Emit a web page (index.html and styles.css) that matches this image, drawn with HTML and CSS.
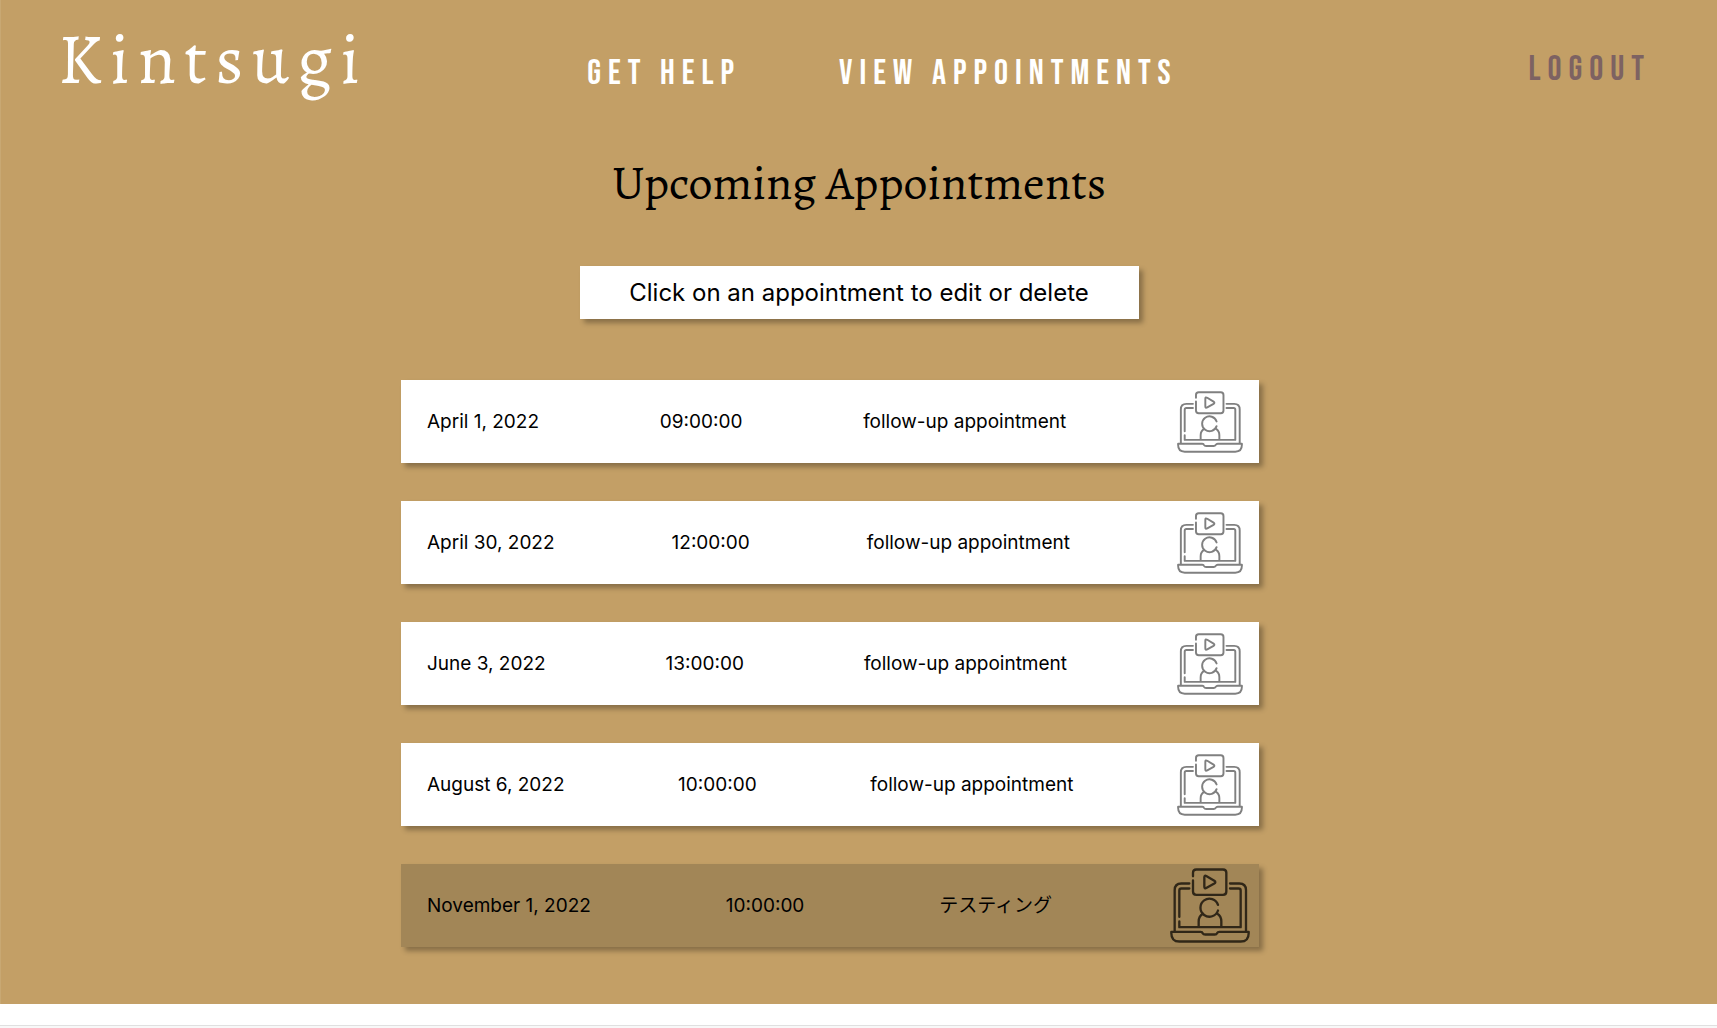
FILE: index.html
```html
<!DOCTYPE html>
<html lang="en">
<head>
<meta charset="utf-8">
<title>Kintsugi</title>
<link rel="stylesheet" href="styles.css">
</head>
<body>
<svg class="sprite" aria-hidden="true">
  <symbol id="video-call" viewBox="0 0 240 224">
    <g fill="none" stroke="currentColor" stroke-width="7" stroke-linecap="round" stroke-linejoin="round">
      <path d="M69 24V14Q69 4 79 4H159Q169 4 169 14V70Q169 80 159 80H79Q69 80 69 70V37"/>
      <path d="M103 27V55Q103 63 110 59L133 46Q139 42 133 38L110 24Q103 20 103 27Z"/>
      <path d="M58 46H34Q14 46 14 66V188M180 46H208Q228 46 228 66V188"/>
      <path d="M58 61H34Q28 61 28 67V146M28 160V177H212V67Q212 61 206 61H180"/>
      <path d="M144 110A27 27 0 1 0 144 127"/>
      <path d="M86 174V160Q86 144 99 137M142 137Q154 144 154 160V174"/>
      <path d="M4 191H92Q97 191 98 195Q100 199 106 199H134Q140 199 141 195Q143 191 148 191H236V195Q236 220 212 220H28Q4 220 4 195Z"/>
    </g>
  </symbol>
</svg>

<div class="page">
  <header class="header">
    <a class="logo" href="#">Kintsugi</a>
    <nav class="nav">
      <a href="#">GET HELP</a>
      <a href="#">VIEW APPOINTMENTS</a>
    </nav>
    <button class="logout" type="button">LOGOUT</button>
  </header>
  <main class="main">
    <h1 class="title">Upcoming Appointments</h1>
    <p class="hint">Click on an appointment to edit or delete</p>
    <ul class="list">
      <li><a class="row" href="#"><span>April 1, 2022</span><span>09:00:00</span><span>follow-up appointment</span><svg class="icon"><use href="#video-call"/></svg></a></li>
      <li><a class="row" href="#"><span>April 30, 2022</span><span>12:00:00</span><span>follow-up appointment</span><svg class="icon"><use href="#video-call"/></svg></a></li>
      <li><a class="row" href="#"><span>June 3, 2022</span><span>13:00:00</span><span>follow-up appointment</span><svg class="icon"><use href="#video-call"/></svg></a></li>
      <li><a class="row" href="#"><span>August 6, 2022</span><span>10:00:00</span><span>follow-up appointment</span><svg class="icon"><use href="#video-call"/></svg></a></li>
      <li><a class="row row-active" href="#"><span>November 1, 2022</span><span>10:00:00</span><span lang="ja">テスティング</span><svg class="icon"><use href="#video-call"/></svg></a></li>
    </ul>
  </main>
</div>
<footer class="footer"></footer>
</body>
</html>
```
FILE: styles.css
```css
* {
  box-sizing: border-box;
}

body {
  margin: 0;
  background: #f8f8f8;
  color: #000;
  font-family: Inter, "Noto Sans CJK JP", sans-serif;
}

a {
  color: inherit;
  text-decoration: none;
}

.sprite {
  display: none;
}

.page {
  background: #c39f66;
  border-left: 1px solid #c8a873;
  padding-bottom: 57px;
}

.header {
  display: grid;
  grid-template-columns: 1fr auto 1fr;
  align-items: center;
  height: 140px;
  padding: 0 66px 0 57px;
}

.logo {
  color: #fff;
  font: 70px/80px Alegreya, "Liberation Serif", serif;
  letter-spacing: 8px;
  padding-bottom: 20px;
}

.nav,
.logout {
  font: 35px/40px "Bebas Neue", "Liberation Sans Narrow", sans-serif;
  letter-spacing: 7px;
}

.nav {
  display: flex;
  gap: 98px;
  margin-left: 56px;
  padding-top: 8px;
  color: #fff;
}

.logout {
  justify-self: end;
  padding: 0;
  border: 0;
  background: none;
  color: #7d6262;
}

.main {
  display: flex;
  flex-direction: column;
}

.title {
  margin: 11px 0 0;
  text-align: center;
  font: 48px/64px Alegreya, "Liberation Serif", serif;
}

.hint {
  width: 559px;
  max-width: 100%;
  margin: 51px auto 0;
  padding: 10px;
  background: #fff;
  box-shadow: 4px 4px 5px rgba(0, 0, 0, 0.3);
  text-align: center;
  font-size: 24px;
  line-height: 33px;
}

.list {
  display: flex;
  flex-direction: column;
  gap: 38px;
  width: 50%;
  margin: 61px 0 0 400px;
  padding: 0;
  list-style: none;
}

.row {
  display: flex;
  align-items: center;
  justify-content: space-between;
  height: 83px;
  padding: 0 26px;
  background: #fff;
  box-shadow: 4px 4px 5px rgba(0, 0, 0, 0.3);
  font-size: 19px;
  line-height: 24px;
}

/* The icon is drawn larger than the slot it takes in the row. */
.icon {
  flex: none;
  width: 66px;
  height: 62px;
  margin: 0 -10px;
  color: #808080;
}

.row-active {
  background: #a28657;
}

.row-active .icon {
  width: 80px;
  height: 75px;
  margin: 0 -17px;
  color: #302718;
}

.footer {
  height: 22px;
  background: #fff;
  border-bottom: 1px solid #e0e0e0;
}
```
